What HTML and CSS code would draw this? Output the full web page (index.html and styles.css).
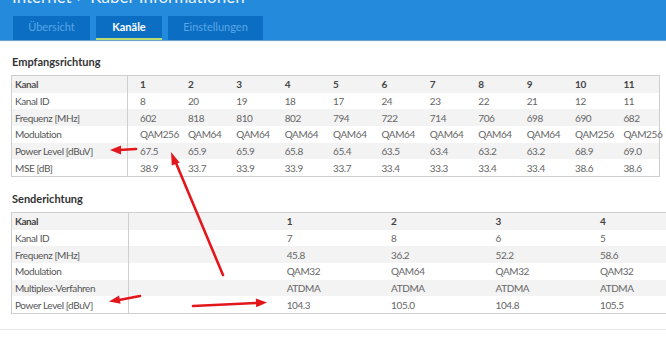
FILE: index.html
```html
<!DOCTYPE html>
<html lang="de">
<head>
    <meta charset="UTF-8">
    <meta name="viewport" content="width=device-width, initial-scale=1.0">
    <title>Kabel-Informationen</title>
    <link rel="stylesheet" href="styles.css">
</head>
<body>
    <div class="page">
        <header class="head">
            <div class="title">Internet &gt; Kabel-Informationen</div>
            <nav class="tabs">
                <a class="tab">Übersicht</a>
                <a class="tab active">Kanäle</a>
                <a class="tab">Einstellungen</a>
            </nav>
        </header>

        <main class="content">
            <h2>Empfangsrichtung</h2>
            <table class="channels down">
                <colgroup>
                    <col class="label-col">
                    <col span="11" class="down-col">
                </colgroup>
                <tr class="head-row"><td>Kanal</td><td>1</td><td>2</td><td>3</td><td>4</td><td>5</td><td>6</td><td>7</td><td>8</td><td>9</td><td>10</td><td>11</td></tr>
                <tr><td>Kanal ID</td><td>8</td><td>20</td><td>19</td><td>18</td><td>17</td><td>24</td><td>23</td><td>22</td><td>21</td><td>12</td><td>11</td></tr>
                <tr><td>Frequenz [MHz]</td><td>602</td><td>818</td><td>810</td><td>802</td><td>794</td><td>722</td><td>714</td><td>706</td><td>698</td><td>690</td><td>682</td></tr>
                <tr><td>Modulation</td><td>QAM256</td><td>QAM64</td><td>QAM64</td><td>QAM64</td><td>QAM64</td><td>QAM64</td><td>QAM64</td><td>QAM64</td><td>QAM64</td><td>QAM256</td><td>QAM256</td></tr>
                <tr><td>Power Level [dBuV]</td><td>67.5</td><td>65.9</td><td>65.9</td><td>65.8</td><td>65.4</td><td>63.5</td><td>63.4</td><td>63.2</td><td>63.2</td><td>68.9</td><td>69.0</td></tr>
                <tr><td>MSE [dB]</td><td>38.9</td><td>33.7</td><td>33.9</td><td>33.9</td><td>33.7</td><td>33.4</td><td>33.3</td><td>33.4</td><td>33.4</td><td>38.6</td><td>38.6</td></tr>
            </table>

            <h2>Senderichtung</h2>
            <table class="channels up">
                <colgroup>
                    <col class="label-col">
                    <col class="gap-col">
                    <col span="4" class="up-col">
                </colgroup>
                <tr class="head-row"><td>Kanal</td><td></td><td>1</td><td>2</td><td>3</td><td>4</td></tr>
                <tr><td>Kanal ID</td><td></td><td>7</td><td>8</td><td>6</td><td>5</td></tr>
                <tr><td>Frequenz [MHz]</td><td></td><td>45.8</td><td>36.2</td><td>52.2</td><td>58.6</td></tr>
                <tr><td>Modulation</td><td></td><td>QAM32</td><td>QAM64</td><td>QAM32</td><td>QAM32</td></tr>
                <tr><td>Multiplex-Verfahren</td><td></td><td>ATDMA</td><td>ATDMA</td><td>ATDMA</td><td>ATDMA</td></tr>
                <tr><td>Power Level [dBuV]</td><td></td><td>104.3</td><td>105.0</td><td>104.8</td><td>105.5</td></tr>
            </table>
        </main>

        <footer class="foot"></footer>

        <!-- rote Markierungen -->
        <svg class="marks" width="666" height="354" viewBox="0 0 666 354">
            <g stroke="#e3161b" stroke-width="2.6" stroke-linecap="round" fill="#e3161b">
                <line x1="136" y1="149" x2="119" y2="150"/>
                <line x1="223" y1="275" x2="176" y2="163"/>
                <line x1="140" y1="296" x2="119" y2="300"/>
                <line x1="193" y1="306" x2="256" y2="303"/>
            </g>
            <g fill="#e3161b">
                <polygon points="110,150 121,145.5 121,154.5"/>
                <polygon points="171,152 179.6,162.4 171.8,165.6"/>
                <polygon points="109,301.6 120.6,303.8 119,295.6"/>
                <polygon points="267,302.5 256.2,307.2 255.8,298.6"/>
            </g>
        </svg>
    </div>
</body>
</html>
```

FILE: styles.css
```css
body {
    margin: 0;
    font-family: Lato, "Liberation Sans", sans-serif;
    background-color: #fff;
    color: #555;
    overflow: hidden;
}
.page {
    position: relative;
    width: 666px;
    height: 354px;
    overflow: hidden;
}
.head {
    display: flex;
    flex-direction: column;
    background-color: #238adc;
    height: 40px;
    border-bottom: 1px solid #6fa2c8;
    box-shadow: 0 1px 0 #eefaff;
}
.title {
    color: #e8f2fb;
    font-size: 17px;
    line-height: 20px;
    margin-top: -13px;
    padding-left: 12px;
    height: 20px;
}
.tabs {
    display: flex;
    gap: 6px;
    padding-left: 13px;
    margin-top: 9px;
}
.tab {
    display: block;
    background-color: #0b6ec3;
    color: #5aa6e8;
    font-size: 11px;
    height: 24px;
    line-height: 22px;
    text-align: center;
    box-sizing: border-box;
}
.tab:nth-child(1) { width: 77px; }
.tab:nth-child(2) { width: 66px; }
.tab:nth-child(3) { width: 95px; }
.tab.active {
    color: #fff;
    font-weight: bold;
    border-bottom: 2px solid #b7dc73;
}
.content {
    padding: 0 11px;
}
h2 {
    font-size: 11px;
    font-weight: bold;
    color: #333;
    margin: 0;
    padding: 13px 1px 6px;
    line-height: 15px;
}
h2 + .channels + h2 {
    padding-top: 14px;
}
.channels {
    border-collapse: collapse;
    table-layout: fixed;
    border: 1px solid #cfcfcf;
    font-size: 10px;
    letter-spacing: -0.4px;
    line-height: 14px;
}
.channels.down { width: 648px; }
.channels.up { width: 680px; }
.label-col { width: 116px; }
.down-col { width: 48.4px; }
.gap-col { width: 144px; }
.up-col { width: 104px; }
.channels td {
    height: 16.67px;
    padding: 0 0 0 14px;
    white-space: nowrap;
    color: #666;
}
.channels.down td {
    padding-left: 12px;
}
.channels td:first-child,
.channels.down td:first-child {
    padding-left: 3px;
    border-right: 1px solid #cfcfcf;
    color: #555;
}
.channels tr:nth-child(odd) {
    background-color: #f3f3f3;
}
.channels .head-row td {
    font-weight: bold;
    color: #444;
}
.foot {
    margin-top: 15px;
    border-top: 1px solid #e6e6e6;
}
.marks {
    position: absolute;
    top: 0;
    left: 0;
    pointer-events: none;
}
```
